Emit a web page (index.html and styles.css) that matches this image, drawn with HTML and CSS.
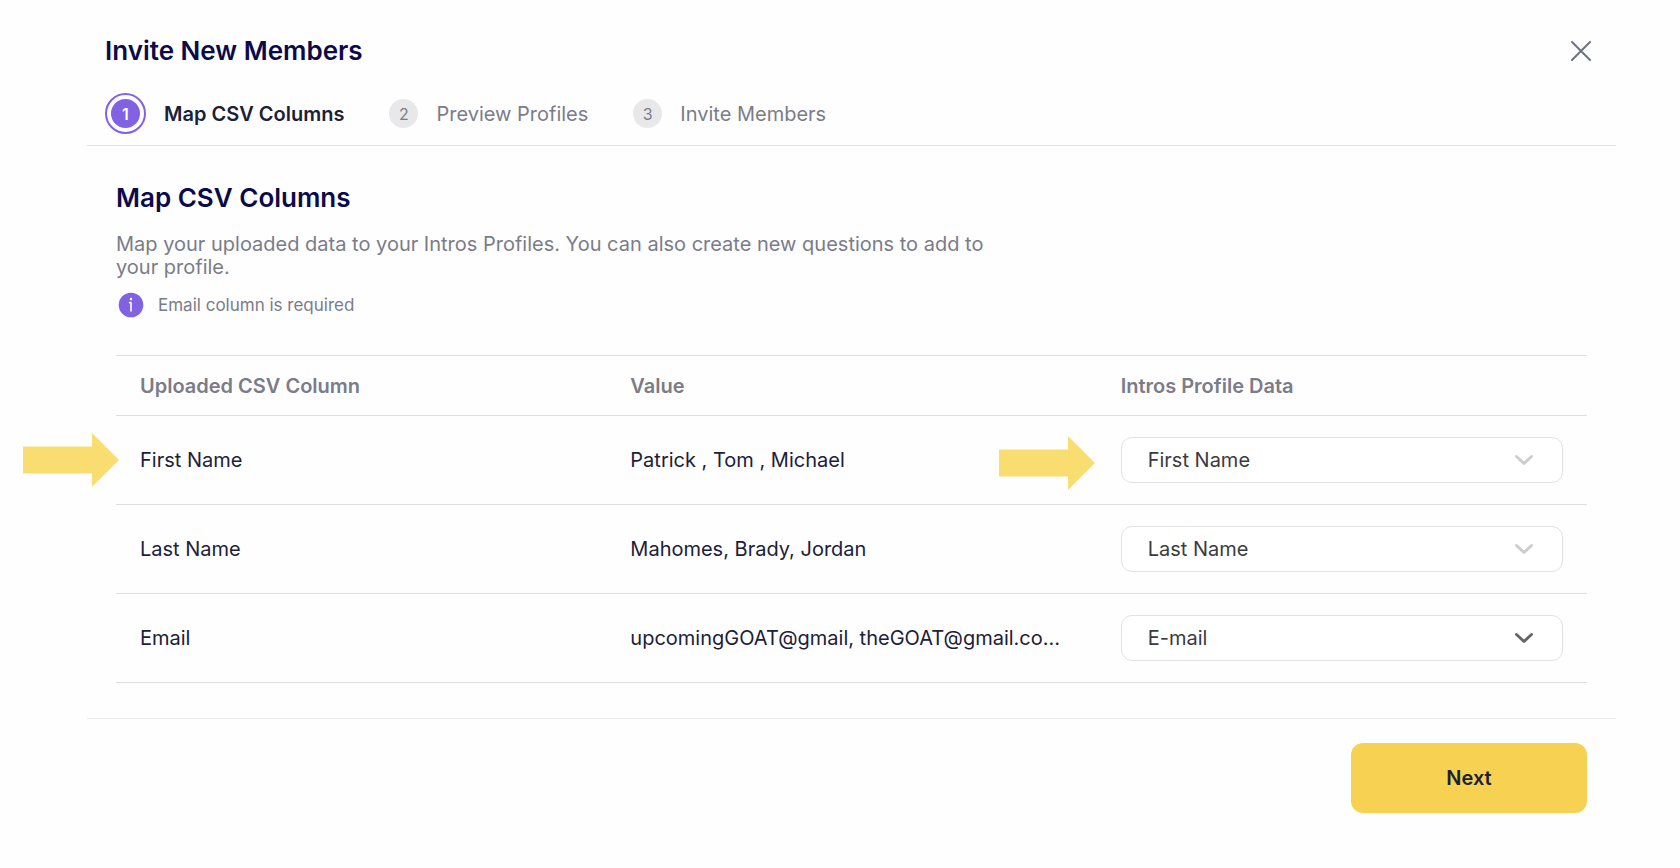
FILE: index.html
```html
<!DOCTYPE html>
<html lang="en">
<head>
<meta charset="utf-8">
<meta name="viewport" content="width=device-width, initial-scale=1">
<title>Invite New Members</title>
<link rel="stylesheet" href="styles.css">
</head>
<body>
<main class="dialog">
  <header class="dialog-header">
    <div class="title-row">
      <h1 class="title">Invite New Members</h1>
      <button class="close" type="button" aria-label="Close">
        <svg width="22" height="22" viewBox="0 0 22 22" fill="none" stroke="currentColor" stroke-width="2" stroke-linecap="round"><path d="M2 2 20 20M20 2 2 20"/></svg>
      </button>
    </div>
    <ol class="steps">
      <li class="step step-active" aria-current="step"><span class="ring"><span class="badge">1</span></span><span>Map CSV Columns</span></li>
      <li class="step"><span class="badge">2</span><span>Preview Profiles</span></li>
      <li class="step"><span class="badge">3</span><span>Invite Members</span></li>
    </ol>
  </header>

  <section class="content">
    <h2 class="title">Map CSV Columns</h2>
    <p class="intro">Map your uploaded data to your Intros Profiles. You can also create new questions to add to your profile.</p>
    <p class="note">
      <svg width="26" height="26" viewBox="0 0 26 26" aria-hidden="true"><circle cx="13" cy="13" r="12.3" fill="#8062e3"/><circle cx="13" cy="7" r="1.2" fill="#fff"/><path d="M11.6 10.6H13v8.400" fill="none" stroke="#fff" stroke-width="1.6" stroke-linecap="round" stroke-linejoin="round"/></svg>
      <span>Email column is required</span>
    </p>

    <table class="mapping">
      <thead>
        <tr><th scope="col">Uploaded CSV Column</th><th scope="col">Value</th><th scope="col">Intros Profile Data</th></tr>
      </thead>
      <tbody>
        <tr>
          <td><svg class="arrow arrow-source" width="96" height="54" viewBox="0 0 96 54" aria-hidden="true"><path d="M0 13.5h69V0l27 27-27 27V40.500H0z"/></svg>First Name</td>
          <td><div class="value">Patrick , Tom , Michael</div></td>
          <td><svg class="arrow arrow-target" width="96" height="54" viewBox="0 0 96 54" aria-hidden="true"><path d="M0 13.5h69V0l27 27-27 27V40.500H0z"/></svg>
            <div class="picker"><select aria-label="Profile field for First Name"><option>First Name</option><option>Last Name</option><option>E-mail</option></select>
            <svg class="chevron" width="20" height="12" viewBox="0 0 20 12" aria-hidden="true"><path d="M2.500 2.500 10 9.500 17.500 2.500"/></svg></div></td>
        </tr>
        <tr>
          <td>Last Name</td>
          <td><div class="value">Mahomes, Brady, Jordan</div></td>
          <td><div class="picker"><select aria-label="Profile field for Last Name"><option>First Name</option><option selected>Last Name</option><option>E-mail</option></select>
            <svg class="chevron" width="20" height="12" viewBox="0 0 20 12" aria-hidden="true"><path d="M2.500 2.500 10 9.500 17.500 2.500"/></svg></div></td>
        </tr>
        <tr>
          <td>Email</td>
          <td><div class="value">upcomingGOAT@gmail, theGOAT@gmail.co…</div></td>
          <td><div class="picker picker-dark"><select aria-label="Profile field for Email"><option>First Name</option><option>Last Name</option><option selected>E-mail</option></select>
            <svg class="chevron" width="20" height="12" viewBox="0 0 20 12" aria-hidden="true"><path d="M2.500 2.500 10 9.500 17.500 2.500"/></svg></div></td>
        </tr>
      </tbody>
    </table>
  </section>

  <footer class="dialog-footer">
    <button class="next" type="button">Next</button>
  </footer>
</main>
</body>
</html>
```
FILE: styles.css
```css
* { box-sizing: border-box; }

body {
  margin: 0;
  background: #fefefe;
  color: #1b2138;
  font-family: Inter, "Liberation Sans", sans-serif;
  font-size: 20px;
  line-height: 24px;
}

.dialog {
  margin: 0 64px 0 87px;
  padding-top: 34px;
}

.dialog-header {
  padding: 0 18px 11px;
  border-bottom: 1px solid #e4e4e6;
}

.title-row {
  display: flex;
  justify-content: space-between;
  align-items: center;
}

.title {
  margin: 0;
  color: #0b0a4a;
  font-size: 26px;
  font-weight: 600;
  line-height: 34px;
}

.close {
  display: flex;
  margin: 0;
  padding: 6px;
  border: 0;
  background: none;
  color: #6e7180;
}

.steps {
  display: flex;
  align-items: center;
  gap: 45px;
  margin: 25px 0 0;
  padding: 0;
  list-style: none;
  color: #7a7c89;
}

.step {
  display: flex;
  align-items: center;
  gap: 18px;
}

.step-active {
  color: #1b2138;
  font-weight: 600;
}

.ring {
  padding: 4px;
  border: 2px solid #8062e3;
  border-radius: 50%;
}

.badge {
  display: grid;
  place-items: center;
  width: 29px;
  height: 29px;
  border-radius: 50%;
  background: #e8e8eb;
  font-size: 16px;
}

.step-active .badge {
  background: #8062e3;
  color: #fff;
}

.content {
  padding: 35px 29px;
}

.intro {
  max-width: 870px;
  margin: 18px 0 0;
  color: #7a7c89;
  line-height: 23px;
}

.note {
  display: flex;
  align-items: center;
  gap: 14px;
  margin: 13px 0 37px;
  padding-left: 2px;
  color: #7a7c89;
  font-size: 17px;
}

.mapping {
  width: 100%;
  table-layout: fixed;
  border-collapse: collapse;
  border-top: 1px solid #e2e2e4;
}

.mapping tr { border-bottom: 1px solid #dedee1; }

.mapping th {
  height: 60px;
  padding: 0 24px;
  color: #7a7c89;
  font-weight: 600;
  text-align: left;
}

.mapping td {
  position: relative;
  height: 89px;
  padding: 0 24px;
}

.value {
  overflow: hidden;
  text-overflow: ellipsis;
  white-space: nowrap;
}

.arrow {
  position: absolute;
  fill: #fadd70;
}

.arrow-source { top: 17px; left: -93px; }
.arrow-target { top: 20px; left: -98px; }

.picker {
  display: grid;
  align-items: center;
}

.picker select {
  grid-area: 1 / 1;
  width: 100%;
  height: 46px;
  margin: 0;
  padding: 0 56px 0 26px;
  appearance: none;
  border: 1px solid #e2e2e4;
  border-radius: 11px;
  background: #fff;
  color: #3b3b3d;
  font: inherit;
}

.chevron {
  grid-area: 1 / 1;
  justify-self: end;
  margin-right: 29px;
  fill: none;
  stroke: #cdcdcf;
  stroke-width: 3;
  stroke-linecap: round;
  stroke-linejoin: round;
  pointer-events: none;
}

.picker-dark .chevron { stroke: #666668; }

.dialog-footer {
  display: flex;
  justify-content: flex-end;
  padding: 24px 29px;
  border-top: 1px solid #ebebed;
}

.next {
  width: 236px;
  height: 70px;
  border: 0;
  border-radius: 12px;
  background: #f6d152;
  color: #1b2138;
  font: inherit;
  font-weight: 600;
}
```
